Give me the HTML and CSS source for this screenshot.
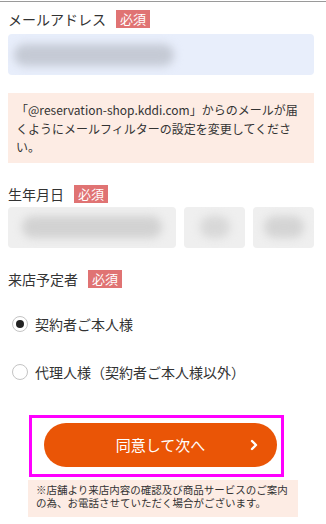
FILE: index.html
```html
<!DOCTYPE html>
<html lang="ja">
<head>
  <meta charset="UTF-8" />
  <meta name="viewport" content="width=device-width, initial-scale=1.0"/>
  <title>予約情報の入力</title>
  <link rel="stylesheet" href="styles.css">
</head>
<body>
  <div class="top-line"></div>

  <div class="field-label">メールアドレス <span class="required">必須</span></div>
  <div class="input input-mail">
    <span class="blur blur-mail"></span>
  </div>

  <div class="notice">
    「@reservation-shop.kddi.com」からのメールが届くようにメールフィルターの設定を変更してください。
  </div>

  <div class="field-label label-birth">生年月日 <span class="required">必須</span></div>
  <div class="date-row">
    <div class="input input-date year"><span class="blur blur-year"></span></div>
    <div class="input input-date"><span class="blur blur-small"></span></div>
    <div class="input input-date"><span class="blur blur-day"></span></div>
  </div>

  <div class="field-label label-visitor">来店予定者 <span class="required">必須</span></div>
  <div class="radio-group">
    <label class="radio-row">
      <span class="radio checked"></span>
      契約者ご本人様
    </label>
    <label class="radio-row">
      <span class="radio"></span>
      代理人様（契約者ご本人様以外）
    </label>
  </div>

  <div class="highlight">
    <a href="#" class="next-button">
      同意して次へ
      <svg class="chevron" width="10" height="12" viewBox="0 0 10 12" aria-hidden="true">
        <path d="M3 2 L7 6 L3 10" fill="none" stroke="#fff" stroke-width="2.4" stroke-linecap="round" stroke-linejoin="round"/>
      </svg>
    </a>
  </div>

  <div class="disclaimer">
    ※店舗より来店内容の確認及び商品サービスのご案内の為、お電話させていただく場合がございます。
  </div>
</body>
</html>
```

FILE: styles.css
```css
body {
  margin: 0;
  padding: 0 12px 0 8px;
  background: #fff;
  font-family: "Noto Sans CJK JP", "Noto Sans", sans-serif;
  color: #333;
  overflow: hidden;
}

.top-line {
  height: 1px;
  margin: 1px -12px 0 -8px;
  background: #9a9a9a;
}

.field-label {
  display: flex;
  align-items: center;
  gap: 10px;
  height: 18px;
  margin-top: 8px;
  font-size: 14px;
  line-height: 18px;
}

.required {
  display: inline-block;
  height: 18px;
  padding: 0 4px;
  background: #e07373;
  color: #fff;
  font-size: 13px;
  line-height: 18px;
}

.input {
  height: 41px;
  border-radius: 4px;
  box-sizing: border-box;
  display: flex;
  align-items: center;
  overflow: hidden;
}

.input-mail {
  margin-top: 6px;
  background: #e8eefb;
  padding-left: 6px;
}

.blur {
  display: block;
  height: 22px;
  border-radius: 11px;
  filter: blur(4px);
}

.blur-mail {
  width: 160px;
  background: #c5cad5;
}

.notice {
  margin-top: 18px;
  padding: 8px 8px 6px;
  background: #fdece4;
  font-size: 12px;
  line-height: 18.5px;
}

.label-birth {
  margin-top: 22px;
}

.date-row {
  display: flex;
  gap: 8px;
  margin-top: 4px;
}

.input-date {
  flex: 1;
  background: #efefef;
  justify-content: center;
}

.input-date.year {
  flex: 0 0 168px;
}

.blur-year {
  width: 140px;
  background: #d2d2d2;
}

.blur-small {
  width: 30px;
  background: #d8d8d8;
}

.blur-day {
  width: 40px;
  background: #d4d4d4;
}

.label-visitor {
  margin-top: 22px;
}

.radio-group {
  margin-top: 12px;
}

.radio-row {
  display: flex;
  align-items: center;
  gap: 7px;
  height: 48px;
  padding-left: 4px;
  font-size: 14px;
}

.radio {
  width: 16px;
  height: 16px;
  box-sizing: border-box;
  border: 1px solid #c4c4c4;
  border-radius: 50%;
  display: flex;
  align-items: center;
  justify-content: center;
}

.radio.checked::after {
  content: "";
  width: 8px;
  height: 8px;
  border-radius: 50%;
  background: #222;
}

.highlight {
  width: 255px;
  margin: 19px 0 0 21px;
  box-sizing: border-box;
  border: 3px solid #ff00ff;
  padding: 5px 4px 7px 12px;
}

.next-button {
  position: relative;
  display: flex;
  align-items: center;
  justify-content: center;
  height: 44px;
  border-radius: 22px;
  background: #ea5506;
  color: #fff;
  font-size: 15px;
  text-decoration: none;
}

.chevron {
  position: absolute;
  right: 18px;
  top: 16px;
}

.disclaimer {
  width: 270px;
  margin: 3px 0 0 20px;
  box-sizing: border-box;
  padding: 3px 8px 8px;
  background: #fdece4;
  font-size: 10.5px;
  line-height: 13px;
}
```
